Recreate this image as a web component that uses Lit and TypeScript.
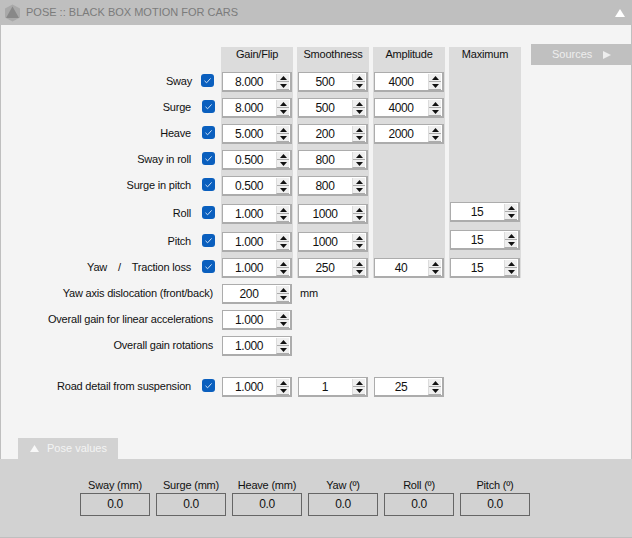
import { LitElement, html, css, nothing } from "lit";
import { customElement } from "lit/decorators.js";

const up = html`<svg class="arr" viewBox="0 0 7 4" width="7" height="4"><path d="M3.5 0L7 4H0z"/></svg>`;
const down = html`<svg class="arr" viewBox="0 0 7 4" width="7" height="4"><path d="M0 0H7L3.5 4z"/></svg>`;

const spin = (v: string, col: number, row: number, raised = false) => html`
  <div class="spin ${raised ? "raised" : ""}" style="grid-column:${col};grid-row:${row}">
    <span class="val">${v}</span>
    <span class="btns"><span class="b">${up}</span><span class="b">${down}</span></span>
  </div>`;

interface Row {
  label: string;
  check?: boolean;
  nudge?: boolean;
  gain: string;
  smooth?: string;
  amp?: string;
  max?: string;
}

const rows: Row[] = [
  { label: "Sway", check: true, nudge: true, gain: "8.000", smooth: "500", amp: "4000" },
  { label: "Surge", check: true, gain: "8.000", smooth: "500", amp: "4000" },
  { label: "Heave", check: true, gain: "5.000", smooth: "200", amp: "2000" },
  { label: "Sway in roll", check: true, gain: "0.500", smooth: "800" },
  { label: "Surge in pitch", check: true, gain: "0.500", smooth: "800" },
  { label: "Roll", check: true, gain: "1.000", smooth: "1000", max: "15" },
  { label: "Pitch", check: true, gain: "1.000", smooth: "1000", max: "15" },
  { label: "Yaw / Traction loss", check: true, gain: "1.000", smooth: "250", amp: "40", max: "15" },
  { label: "Yaw axis dislocation (front/back)", gain: "200" },
  { label: "Overall gain for linear accelerations", gain: "1.000" },
  { label: "Overall gain rotations", gain: "1.000" },
  { label: "Road detail from suspension", check: true, gain: "1.000", smooth: "1", amp: "25" },
];

const heads = ["Gain/Flip", "Smoothness", "Amplitude", "Maximum"];
const poses = ["Sway (mm)", "Surge (mm)", "Heave (mm)", "Yaw (º)", "Roll (º)", "Pitch (º)"];

const labelText = (t: string) =>
  t.startsWith("Yaw / ") ? html`<span class="spaced">Yaw / </span>${t.slice(6)}` : t;

@customElement("app-root")
export class AppRoot extends LitElement {
  static styles = css`
    :host {
      display: block;
      width: 632px;
      height: 538px;
      font: 11px/15px "Liberation Sans", Arial, sans-serif;
      letter-spacing: -0.2px;
      color: #111;
    }
    .frame {
      box-sizing: border-box;
      height: 538px;
      display: flex;
      flex-direction: column;
      background: #f4f4f4;
      border-left: 1px solid #bfbfbf;
      border-right: 1px solid #bfbfbf;
    }
    .title {
      height: 25px;
      margin: 0 -1px;
      flex: none;
      background: #bfbfbf;
      display: flex;
      align-items: center;
      padding: 0 7px 0 4px;
      gap: 5px;
      color: #7b7b7b;
      letter-spacing: 0;
    }
    .title .name { flex: 1; }
    .grid {
      display: grid;
      grid-template-columns: 190px 22px 72px 72px 72px 72px 106px;
      column-gap: 4px;
      grid-template-rows: 25px 26px 26px 26px 26px 28px 28px 26px 26px 26px 26px 41px 20px;
      padding-top: 22px;
    }
    .band {
      background: #dcdcdc;
      grid-row: 1 / span 9;
      margin-bottom: 6px;
    }
    .head {
      grid-row: 1;
      text-align: center;
    }
    .label {
      grid-column: 1;
      text-align: right;
      white-space: nowrap;
      height: 20px;
      line-height: 18px;
    }
    .label.nudge { margin-right: -1px; }
    .label.wide {
      grid-column: 1 / span 2;
      margin-right: 4px;
    }
    .spaced { word-spacing: 8px; }
    .chk {
      grid-column: 2;
      margin: 2px 0 0 7px;
      width: 13px;
      height: 13px;
      border-radius: 3px;
      background: #0a5fbe;
      display: flex;
      align-items: center;
      justify-content: center;
    }
    .chk.nudge { margin-left: 6px; }
    .spin {
      box-sizing: border-box;
      justify-self: center;
      width: 70px;
      height: 20px;
      border: 1px solid #acacac;
      border-bottom-width: 2px;
      border-right-width: 2px;
      background: #fff;
      display: flex;
    }
    .spin.raised { margin-top: -2px; }
    .val {
      flex: 1;
      text-align: center;
      font-size: 12px;
      letter-spacing: -0.4px;
      line-height: 18px;
      padding-right: 1px;
    }
    .btns {
      flex: none;
      box-sizing: border-box;
      width: 13px;
      height: 16px;
      margin: 1px 1px 0 0;
      display: flex;
      flex-direction: column;
      gap: 1px;
      background: #acacac;
      border-left: 1px solid #dcdcdc;
      border-bottom: 1px solid #acacac;
    }
    .b {
      flex: 1;
      background: #efefef;
      display: flex;
      align-items: center;
      justify-content: center;
    }
    .arr { display: block; fill: #111; }
    .mm {
      grid-column: 4;
      grid-row: 10;
      padding-left: 3px;
      line-height: 18px;
    }
    .sources {
      grid-column: 7;
      grid-row: 1;
      margin: -3px -1px 0 6px;
      height: 21px;
      background: #c0c0c0;
      color: #eee;
      display: flex;
      align-items: center;
      gap: 11px;
      padding-left: 21px;
      box-sizing: border-box;
      letter-spacing: 0;
    }
    .foot { margin-top: auto; flex: none; }
    .tab {
      margin-left: 17px;
      width: 100px;
      height: 21px;
      background: #d2d2d2;
      color: #f4f4f4;
      display: flex;
      align-items: center;
      gap: 8px;
      padding-left: 12px;
      box-sizing: border-box;
      letter-spacing: 0;
    }
    .panel {
      height: 78px;
      margin: 0 -1px;
      border-bottom: 1px solid #bfbfbf;
      background: #d2d2d2;
      display: flex;
      gap: 6px;
      padding-left: 80px;
    }
    .pose { width: 70px; padding-top: 19px; text-align: center; }
    .box {
      box-sizing: border-box;
      height: 23px;
      border: 1px solid #666;
      font-size: 12px;
      line-height: 21px;
      letter-spacing: -0.4px;
    }
  `;

  render() {
    return html`<div class="frame">
      <div class="title">
        <svg width="17" height="18" viewBox="0 0 17 18">
          <path d="M8.5 0.5L16 4.5V13.5L8.5 17.5L1 13.5V4.5z" fill="#a9a9a9"/>
          <path d="M8.5 2.5L15 14H2z" fill="#888"/>
        </svg>
        <span class="name">POSE :: BLACK BOX MOTION FOR CARS</span>
        <svg width="10" height="8" viewBox="0 0 10 8"><path d="M5 0L10 8H0z" fill="#fff"/></svg>
      </div>
      <div class="grid">
        ${heads.map((h, i) => html`
          <div class="band" style="grid-column:${i + 3}"></div>
          <div class="head" style="grid-column:${i + 3}">${h}</div>`)}
        <div class="sources">Sources
          <svg width="8" height="8" viewBox="0 0 8 8"><path d="M0 0L8 4L0 8z" fill="#eee"/></svg>
        </div>
        ${rows.map((r, i) => {
          const row = i + 2;
          return html`
            <div class="label ${r.check ? "" : "wide"} ${r.nudge ? "nudge" : ""}" style="grid-row:${row}">${labelText(r.label)}</div>
            ${r.check
              ? html`<div class="chk ${r.nudge ? "nudge" : ""}" style="grid-row:${row}">
                  <svg width="9" height="9" viewBox="0 0 9 9"><path d="M1.5 4.8L3.6 6.8L7.6 2.4" fill="none" stroke="#cfe2f6" stroke-width="1"/></svg>
                </div>`
              : nothing}
            ${spin(r.gain, 3, row)}
            ${r.smooth ? spin(r.smooth, 4, row) : nothing}
            ${r.amp ? spin(r.amp, 5, row) : nothing}
            ${r.max ? spin(r.max, 6, row, r.label !== "Yaw / Traction loss") : nothing}
          `;
        })}
        <div class="mm">mm</div>
      </div>
      <div class="foot">
        <div class="tab">
          <svg width="9" height="7" viewBox="0 0 9 7"><path d="M4.5 0L9 7H0z" fill="#f8f8f8"/></svg>
          Pose values
        </div>
        <div class="panel">
          ${poses.map((p) => html`<div class="pose">${p}<div class="box">0.0</div></div>`)}
        </div>
      </div>
    </div>`;
  }
}
